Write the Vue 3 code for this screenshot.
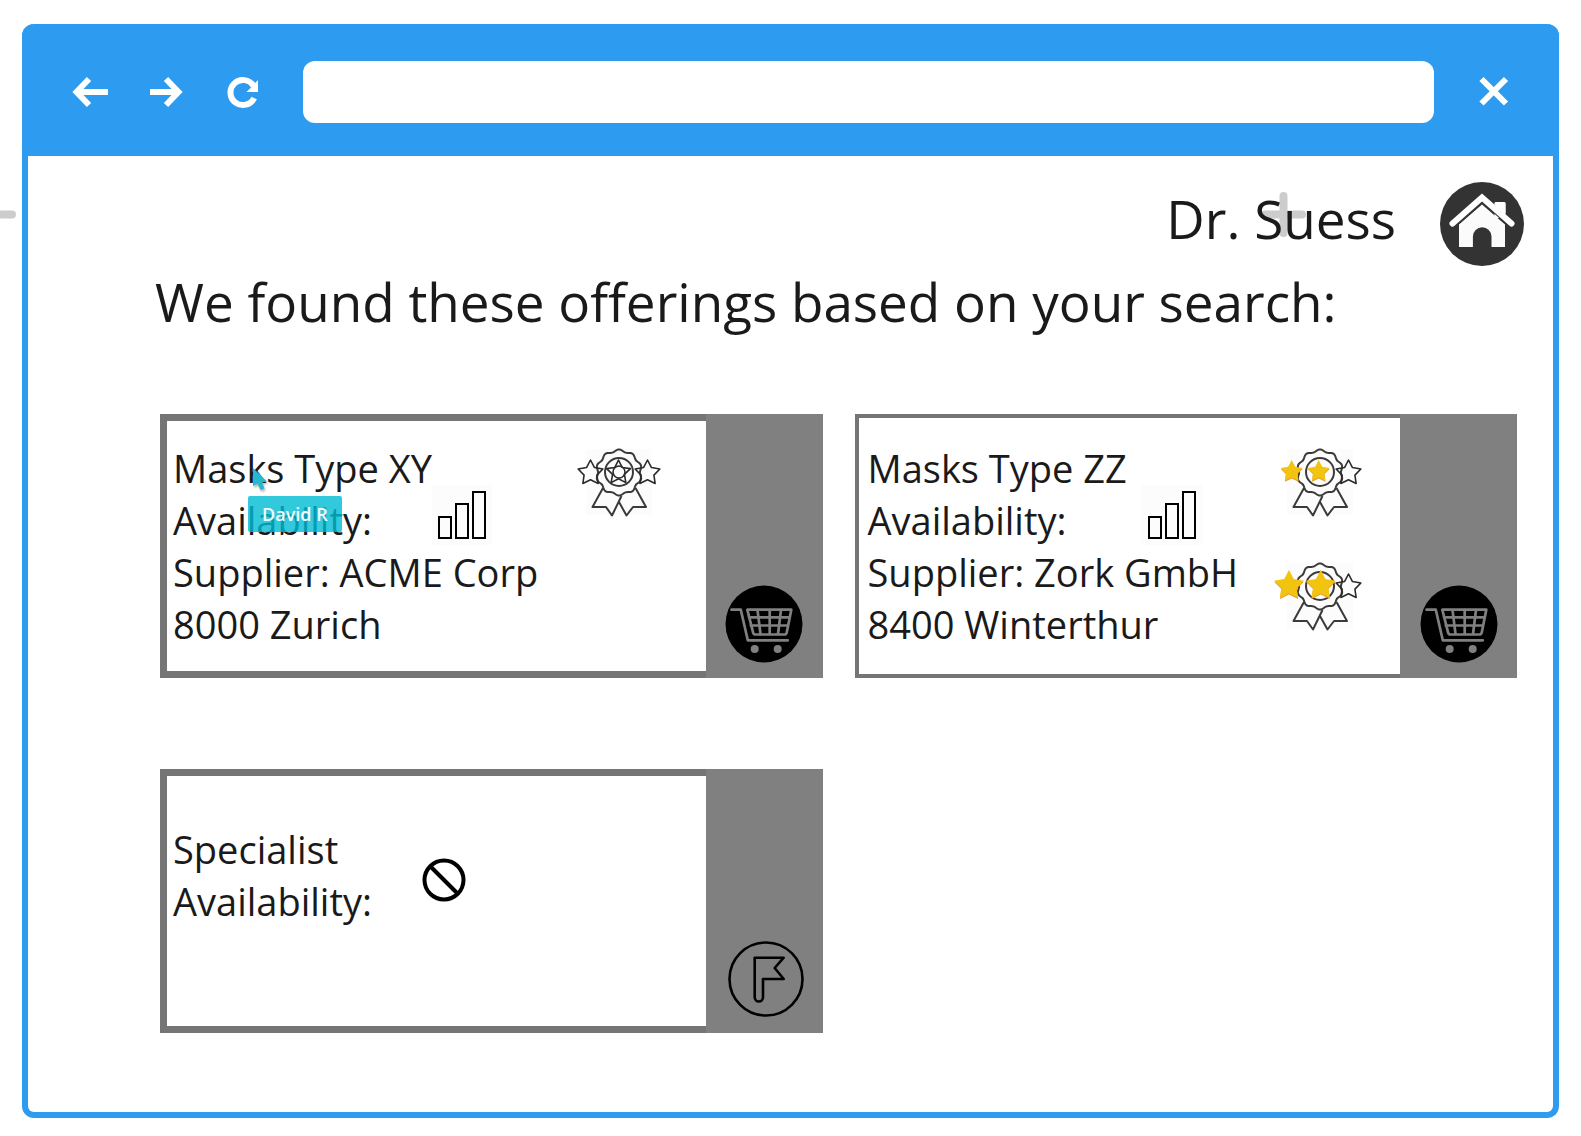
<template>
  <div class="page">
    <svg class="mark mark-left" viewBox="0 0 45 45" aria-hidden="true">
      <path d="M22.5 4v37M4 22.5h37" />
    </svg>

    <div class="window">
      <header class="toolbar">
        <button type="button" class="tool" aria-label="Back">
          <svg viewBox="0 0 36 36"><path d="M17 5 4.500 18 17 31M5 18h31" /></svg>
        </button>
        <button type="button" class="tool" aria-label="Forward">
          <svg viewBox="0 0 36 36"><path d="M17 5l12.500 13L17 31M31 18H1" /></svg>
        </button>
        <button type="button" class="tool" aria-label="Reload">
          <svg viewBox="0 0 36 36">
            <path d="M28.200 24A12.500 12.500 0 1 1 27.500 11.800" />
            <path class="solid" d="M32 6v12H20.500l4.500-4.500z" />
          </svg>
        </button>
        <input v-model="address" class="address" type="text" aria-label="Address" />
        <button type="button" class="tool" aria-label="Close">
          <svg viewBox="0 0 36 36"><path d="M6.500 5l24.500 24.500M31 5 6.500 29.500" /></svg>
        </button>
      </header>

      <main class="content">
        <svg class="mark mark-right" viewBox="0 0 45 45" aria-hidden="true">
          <path d="M22.500 4v37M4 22.500h37" />
        </svg>

        <div class="account">
          <span class="user">Dr. Suess</span>
          <button type="button" class="home" aria-label="Home">
            <svg viewBox="0 0 84 84">
              <circle cx="42" cy="42" r="42" fill="#333" />
              <path d="M54.500 36V21.500q0-1.500 1.500-1.500h8q1.500 0 1.500 1.500V36z" fill="#fff" />
              <path d="M12 42 42 15.500 72 42" fill="none" stroke="#333" stroke-width="8" />
              <path d="M12.500 41.500 42 15.500l29.500 26" fill="none" stroke="#fff" stroke-width="6" stroke-linecap="round" />
              <path d="M54.500 27v-5.500q0-1.500 1.500-1.500h8q1.500 0 1.500 1.500V36z" fill="#fff" />
              <path d="M19 42.500 42 22.500l23 20V65H51.500V54.500a9.300 9.300 0 0 0-18.600 0V65H19z" fill="#fbfbfb" />
            </svg>
          </button>
        </div>

        <h1>We found these offerings based on your search:</h1>

        <section class="offerings">
          <article v-for="item in offerings" :key="item.name" class="card" :class="item.variant">
            <div class="body">
              <div class="details">
                <p>{{ item.name }}</p>
                <p class="status">
                  <span>Availability:</span>
                  <svg v-if="item.available" class="bars" viewBox="0 0 49 60" role="img" aria-label="Available">
                    <rect class="backing" x="-6" y="-5" width="60" height="60" />
                    <path d="M1 27h12v21H1zM18 14h12v34H18zM35 2h12v46H35z" />
                  </svg>
                  <svg v-else class="ban" viewBox="0 0 44 96" role="img" aria-label="Not available">
                    <circle cx="22" cy="27" r="19.500" />
                    <path d="M8 13l28 28" />
                  </svg>
                </p>
                <p>{{ item.supplier }}</p>
                <p v-if="item.place">{{ item.place }}</p>
              </div>

              <div v-if="item.medals.length" class="medals">
                <svg v-for="(medal, i) in item.medals" :key="i" class="medal" viewBox="0 0 94 70" role="img" aria-label="Rating">
                  <rect class="backing" x="14" y="2" width="66" height="66" />
                  <path d="M31 41 20.500 60H34l6 8.500L49.500 49" />
                  <path d="M63.500 41 74 60H61l-6.500 8.500L47 55" />
                  <path :d="rosette" />
                  <circle cx="47" cy="25" r="14" />
                  <template v-if="!medal.gold">
                    <path class="thin" :d="star(46.5, 25.5, 12.5, 0.5)" />
                    <circle class="thin" cx="47" cy="25" r="6" />
                    <path class="thin" :d="star(18.5, 26, 13, 0.52)" />
                  </template>
                  <template v-for="g in medal.gold || []" :key="g.x">
                    <path class="gold-edge" :d="star(g.x, g.y + 1, g.r, 0.52)" />
                    <path class="gold" :d="star(g.x, g.y, g.r, 0.52)" />
                  </template>
                  <path class="thin" :d="star(75.5, 26, 13, 0.52)" />
                </svg>
              </div>
            </div>

            <div class="side">
              <button v-if="item.available" type="button" class="action" aria-label="Add to cart">
                <svg viewBox="0 0 78 78">
                  <circle cx="39" cy="39" r="38.500" />
                  <g fill="none" stroke="#808080" stroke-width="2.700" stroke-linecap="round" stroke-linejoin="round">
                    <path d="M6.500 24.700h9.300l7 30.600h40" />
                    <path d="M22.300 24.700h44l-4.500 22.500q-.5 2.300-2.500 2.300H30.500q-2 0-2.500-2.300z" />
                    <path d="M32.500 25 35.500 49M44.700 25v24M56 25l-3 24M24 32.300h40.500M25.800 40.500h37" />
                  </g>
                  <circle cx="29.700" cy="64" r="4" fill="#808080" />
                  <circle cx="52.700" cy="64" r="4" fill="#808080" />
                </svg>
              </button>
              <button v-else type="button" class="action" aria-label="Flag">
                <svg viewBox="0 0 78 78">
                  <g fill="none" stroke="#000" stroke-width="2.600" stroke-linejoin="round">
                    <circle cx="41" cy="39" r="36.500" />
                    <path d="M29.700 17.700h29l-9 10.300 9 11H38v18.300a4.150 4.150 0 0 1-8.300 0z" />
                  </g>
                </svg>
              </button>
            </div>
          </article>
        </section>
      </main>
    </div>

    <!-- other participant's pointer on the board -->
    <div class="pointer">
      <svg viewBox="0 0 16 26" aria-hidden="true"><path d="M1 1l14 13.500-5 1 2.500 6-4 1.500-3-6.500L1 19z" /></svg>
      <span>David R</span>
    </div>
  </div>
</template>

<script setup>
import { ref } from 'vue'

const address = ref('')

const offerings = [
  {
    name: 'Masks Type XY',
    supplier: 'Supplier: ACME Corp',
    place: '8000 Zurich',
    available: true,
    variant: 'thick',
    medals: [{}]
  },
  {
    name: 'Masks Type ZZ',
    supplier: 'Supplier: Zork GmbH',
    place: '8400 Winterthur',
    available: true,
    variant: 'slim',
    medals: [
      { gold: [{ x: 18.7, y: 24.5, r: 11.5 }, { x: 45.7, y: 24.5, r: 11.5 }] },
      { gold: [{ x: 16, y: 24.5, r: 15.5 }, { x: 47.7, y: 24.5, r: 15.5 }] }
    ]
  },
  {
    name: 'Specialist',
    supplier: '',
    place: '',
    available: false,
    variant: 'blocked',
    medals: []
  }
]

// five-pointed star, inner = ratio of the inner radius
function star(cx, cy, r, inner) {
  const pts = []
  for (let i = 0; i < 10; i++) {
    const a = (i * Math.PI) / 5
    const d = i % 2 ? r * inner : r
    pts.push((cx + d * Math.sin(a)).toFixed(2) + ' ' + (cy - d * Math.cos(a)).toFixed(2))
  }
  return 'M' + pts.join('L') + 'z'
}

// wavy outline of the medal
function wave() {
  const pts = []
  for (let i = 0; i < 120; i++) {
    const a = (i * Math.PI) / 60
    const d = 22 + 1.1 * Math.cos(10 * a)
    pts.push((47 + d * Math.sin(a)).toFixed(2) + ' ' + (25.5 - d * Math.cos(a)).toFixed(2))
  }
  return 'M' + pts.join('L') + 'z'
}
const rosette = wave()
</script>

<style>
body {
  margin: 0;
  background: #fff;
}
</style>

<style scoped>
.page {
  position: relative;
  display: flex;
  min-height: 100vh;
  padding: 24px 22px 18px;
  box-sizing: border-box;
  overflow: hidden;
  color: #1a1a1a;
  font-family: "Open Sans", "Noto Sans", sans-serif;
}

button {
  flex: none;
  padding: 0;
  border: 0;
  background: none;
  cursor: pointer;
}

svg {
  display: block;
  overflow: visible;
}

.window {
  flex: 1;
  min-width: 0;
  border: 6px solid #2d9bf0;
  border-top: 0;
  border-radius: 12px;
  background: #fff;
}

.toolbar {
  display: flex;
  align-items: center;
  gap: 41px;
  height: 132px;
  margin: 0 -6px;
  padding: 3px 48px 0 50px;
  border-radius: 12px 12px 0 0;
  box-sizing: border-box;
  background: #2d9bf0;
}

.tool svg {
  width: 36px;
  height: 36px;
  fill: none;
  stroke: #fff;
  stroke-width: 6;
}

.tool .solid {
  fill: #fff;
  stroke: none;
}

.address {
  flex: 1;
  min-width: 0;
  height: 62px;
  padding: 0 16px;
  border: 0;
  border-radius: 12px;
  box-sizing: border-box;
  background: #fff;
  font: inherit;
  font-size: 24px;
}

.content {
  position: relative;
  padding: 26px 29px 28px 127px;
}

.mark {
  position: absolute;
  width: 45px;
  height: 45px;
  stroke: #ccc;
  stroke-width: 8;
  stroke-linecap: round;
}

.mark-left {
  top: 192px;
  left: -29px;
}

.mark-right {
  top: 36px;
  right: 247px;
}

.account {
  position: relative;
  display: flex;
  justify-content: flex-end;
  align-items: flex-start;
  gap: 44px;
}

.user {
  font-size: 53px;
  line-height: 74px;
}

.home svg {
  width: 84px;
  height: 84px;
}

h1 {
  margin: 0 0 76px;
  font-size: 53px;
  font-weight: 400;
  line-height: 72px;
}

.offerings {
  display: grid;
  grid-template-columns: repeat(2, minmax(0, 1fr));
  gap: 91px 32px;
  padding: 0 7px 0 5px;
}

.card {
  --frame: 7px;
  --status: 265px;
  --medal: 40px;
  display: flex;
  min-height: 264px;
  background: #808080;
}

.card.slim {
  --frame: 4px;
  --status: 280px;
  --medal: 33px;
}

.card.blocked {
  --status: 249px;
}

.body {
  display: flex;
  align-items: center;
  flex: 1;
  min-width: 0;
  padding-left: calc(13px - var(--frame));
  border: var(--frame) solid #757575;
  border-right: 0;
  background: #fff;
}

.details {
  flex: 1;
  min-width: 0;
  font-size: 38px;
  line-height: 52px;
  white-space: nowrap;
}

.details p {
  height: 52px;
  margin: 0;
}

.details .status {
  display: grid;
  grid-template-columns: var(--status) auto;
  justify-content: start;
  align-content: center;
  align-items: center;
}

.backing {
  fill: #fcfcfc;
  stroke: none;
}

.bars {
  width: 49px;
  height: 60px;
  fill: none;
  stroke: #000;
  stroke-width: 2;
}

.ban {
  width: 44px;
  height: 96px;
  fill: none;
  stroke: #000;
  stroke-width: 4;
}

.medals {
  display: flex;
  flex-direction: column;
  align-self: flex-start;
  gap: 44px;
  padding-top: calc(33px - var(--frame));
  padding-right: var(--medal);
}

.medal {
  width: 94px;
  height: 70px;
  fill: none;
  stroke: #3a3a3a;
  stroke-width: 2;
  stroke-linejoin: round;
}

.medal .backing,
.medal .gold,
.medal .gold-edge {
  stroke: none;
}

.medal .thin {
  stroke: #2b2b2b;
  stroke-width: 1.6;
}

.medal .gold {
  fill: #f1c40f;
}

.medal .gold-edge {
  fill: #f0932b;
}

.side {
  display: flex;
  justify-content: center;
  align-items: flex-end;
  width: 117px;
  padding-bottom: 15px;
  box-sizing: border-box;
}

.action svg {
  width: 78px;
  height: 78px;
}

.pointer {
  position: absolute;
  top: 467px;
  left: 248px;
}

.pointer svg {
  width: 16px;
  height: 26px;
  margin: 0 0 3px 4px;
  fill: #26b8ce;
  filter: drop-shadow(1px 2px 1px rgba(0, 0, 0, 0.3));
}

.pointer span {
  display: block;
  padding: 0 14px;
  border-radius: 2px;
  background: rgba(0, 188, 212, 0.8);
  color: #f4fcfd;
  font-size: 18px;
  font-weight: 600;
  line-height: 36px;
}
</style>
